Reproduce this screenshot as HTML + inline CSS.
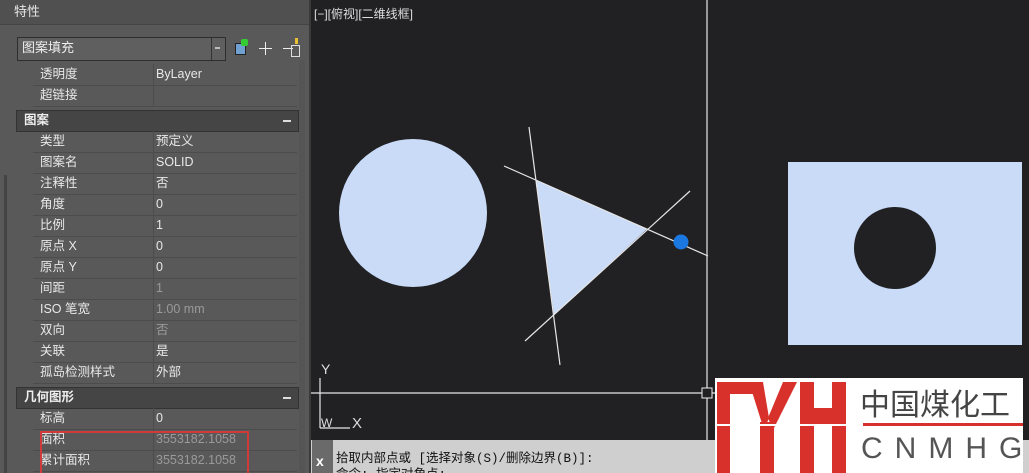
<!DOCTYPE html>
<html><head><meta charset="utf-8"><style>
html,body{margin:0;width:1029px;height:473px;overflow:hidden}
body{background:#212124;position:relative;font-family:"Liberation Sans","Noto Sans CJK SC",sans-serif;}
.a{position:absolute}
#panel{left:0;top:0;width:309px;height:473px;background:#595959;overflow:hidden}
.row{position:absolute;left:33px;width:264px;height:21px;border-bottom:1px solid #4c4c4c;font-size:12.5px;line-height:16px;color:#e8e8e8}
.row span{position:absolute;left:7px;top:2px;line-height:16px}
.row b{position:absolute;left:123px;top:2px;font-weight:normal;line-height:16px}
.row i{position:absolute;left:120px;top:0;width:1px;height:21px;background:#4c4c4c}
.g b{color:#9a9a9a}
.sec{position:absolute;left:16px;width:281px;height:20px;background:#454545;border:1px solid #333;font-size:12.5px;line-height:16px;font-weight:bold;color:#eee}
.sec span{position:absolute;left:7px;top:1px}
.sec em{position:absolute;right:7px;top:9px;width:8px;height:2px;background:#ddd}
</style></head><body>
<div id="panel" class="a">
 <div class="a" style="left:0;top:0;width:309px;height:24px;background:#505050;border-bottom:1px solid #444"></div>
 <div class="a" style="left:14px;top:4px;font-size:13px;line-height:16px;color:#e6e6e6">特性</div>
 <div class="a" style="left:17px;top:37px;width:207px;height:22px;background:#5f5f5f;border:1px solid #2e2e2e"></div>
 <div class="a" style="left:22px;top:40px;font-size:13px;line-height:16px;color:#eee">图案填充</div>
 <div class="a" style="left:211px;top:38px;width:1px;height:22px;background:#333"></div>
 <div class="a" style="left:215px;top:47px;width:5px;height:2px;background:#bbb"></div>
 <div class="a" style="left:235px;top:43px;width:9px;height:10px;background:#6fa0d0;border:1px solid #222"></div>
 <div class="a" style="left:241px;top:39px;width:7px;height:7px;background:#3c3;border-radius:2px"></div>
 <div class="a" style="left:259px;top:48px;width:13px;height:1px;background:#eee"></div>
 <div class="a" style="left:265px;top:42px;width:1px;height:13px;background:#eee"></div>
 <div class="a" style="left:283px;top:48px;width:10px;height:1px;background:#eee"></div>
 <div class="a" style="left:291px;top:45px;width:7px;height:10px;border:1px solid #ddd"></div>
 <div class="a" style="left:295px;top:38px;width:3px;height:6px;background:#e8c030"></div>
 <div class="a" style="left:4px;top:175px;width:3px;height:298px;background:#444"></div>
 <div class="a" style="left:299px;top:60px;width:6px;height:413px;background:#555"></div>
 <div class="row" style="top:64px"><span>透明度</span><i></i><b>ByLayer</b></div>
 <div class="row" style="top:85px"><span>超链接</span><i></i></div>
 <div class="sec" style="top:110px"><span>图案</span><em></em></div>
 <div class="row" style="top:131px"><span>类型</span><i></i><b>预定义</b></div>
 <div class="row" style="top:152px"><span>图案名</span><i></i><b>SOLID</b></div>
 <div class="row" style="top:173px"><span>注释性</span><i></i><b>否</b></div>
 <div class="row" style="top:194px"><span>角度</span><i></i><b>0</b></div>
 <div class="row" style="top:215px"><span>比例</span><i></i><b>1</b></div>
 <div class="row" style="top:236px"><span>原点 X</span><i></i><b>0</b></div>
 <div class="row" style="top:257px"><span>原点 Y</span><i></i><b>0</b></div>
 <div class="row g" style="top:278px"><span>间距</span><i></i><b>1</b></div>
 <div class="row g" style="top:299px"><span>ISO 笔宽</span><i></i><b>1.00 mm</b></div>
 <div class="row g" style="top:320px"><span>双向</span><i></i><b>否</b></div>
 <div class="row" style="top:341px"><span>关联</span><i></i><b>是</b></div>
 <div class="row" style="top:362px"><span>孤岛检测样式</span><i></i><b>外部</b></div>
 <div class="sec" style="top:387px"><span>几何图形</span><em></em></div>
 <div class="row" style="top:408px"><span>标高</span><i></i><b>0</b></div>
 <div class="row g" style="top:429px"><span>面积</span><i></i><b>3553182.1058</b></div>
 <div class="row g" style="top:450px"><span>累计面积</span><i></i><b>3553182.1058</b></div>
 <div class="a" style="left:40px;top:431px;width:205px;height:42px;border:2px solid #d03a3a;border-bottom:none"></div>
</div>
<div class="a" style="left:309px;top:0;width:2px;height:473px;background:#3a3a3a"></div>
<div class="a" style="left:314px;top:6px;font-size:12px;line-height:16px;color:#ddd">[−][俯视][二维线框]</div>
<svg class="a" style="left:0;top:0" width="1029" height="473">
 <circle cx="413" cy="213" r="74" fill="#c9dbf7"/>
 <polygon points="536,180 647,229 554,315" fill="#c9dbf7"/>
 <g stroke="#e6e6e6" stroke-width="1.2">
 <line x1="529" y1="127" x2="560" y2="365"/>
 <line x1="504" y1="166" x2="708" y2="256"/>
 <line x1="525" y1="341" x2="690" y2="191"/>
 <line x1="707" y1="0" x2="707" y2="440"/>
 <line x1="311" y1="393" x2="788" y2="393"/>
 <line x1="320" y1="378" x2="320" y2="428"/>
 <line x1="320" y1="428" x2="350" y2="428"/>
 </g>
 <rect x="702" y="388" width="10" height="10" fill="#212124" stroke="#eee"/>
 <circle cx="681" cy="242" r="7.5" fill="#1a78e0"/>
 <rect x="788" y="162" width="234" height="183" fill="#c9dbf7"/>
 <circle cx="895" cy="248" r="41" fill="#212124"/>
 <text x="321" y="374" fill="#ddd" font-size="14" font-family="Liberation Sans">Y</text>
 <text x="321" y="427" fill="#ddd" font-size="12" font-family="Liberation Sans">W</text>
 <text x="352" y="428" fill="#ddd" font-size="15" font-family="Liberation Sans">X</text>
</svg>
<div class="a" style="left:311px;top:440px;width:718px;height:33px;background:#cfcfcf"></div>
<div class="a" style="left:312px;top:440px;width:21px;height:33px;background:#6a6a6a"></div>
<div class="a" style="left:316px;top:453px;font-size:14px;line-height:16px;font-weight:bold;color:#fff">x</div>
<div class="a" style="left:336px;top:451px;font-size:12.5px;line-height:16px;color:#111;white-space:nowrap;font-family:'Liberation Mono','Noto Sans CJK SC',monospace">拾取内部点或 [选择对象(S)/删除边界(B)]:<br>命令: 指定对角点:</div>
<div class="a" style="left:715px;top:378px;width:308px;height:95px;background:#fff"></div>
<svg class="a" style="left:715px;top:378px" width="140" height="95">
 <g fill="#d8302a">
 <rect x="2" y="4" width="13" height="91"/>
 <rect x="2" y="4" width="46" height="12"/>
 <polygon points="34,4 48,4 54,40 49,52"/>
 <polygon points="68,4 82,4 58,52 53,40"/>
 <rect x="45" y="44" width="14" height="51"/>
 <rect x="85" y="4" width="14" height="91"/>
 <rect x="117" y="4" width="14" height="91"/>
 <rect x="85" y="30" width="46" height="18"/>
 </g>
 <rect x="0" y="46" width="140" height="2" fill="#fff"/>
</svg>
<div class="a" style="left:860px;top:384px;font-size:30px;color:#444;white-space:nowrap;font-family:'Noto Sans CJK SC',sans-serif;line-height:36px">中国煤化工</div>
<div class="a" style="left:863px;top:423px;width:160px;height:3px;background:#d8302a"></div>
<div class="a" style="left:861px;top:432px;font-size:30px;color:#555;letter-spacing:12px;white-space:nowrap;line-height:34px">CNMHG</div>
</body></html>
